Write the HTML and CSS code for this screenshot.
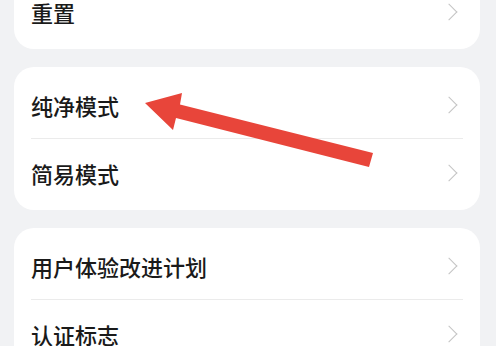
FILE: index.html
```html
<!doctype html>
<html lang="zh-CN">
<head>
    <meta charset="utf-8">
    <title>设置</title>
    <link rel="stylesheet" href="styles.css">
</head>
<body>
    <div class="page">
        <div class="card card-first">
            <div class="row"><span class="label">重置</span><span class="chev"></span></div>
        </div>

        <div class="card">
            <div class="row"><span class="label">纯净模式</span><span class="chev"></span></div>
            <div class="row"><span class="label">简易模式</span><span class="chev"></span></div>
        </div>

        <div class="card">
            <div class="row"><span class="label">用户体验改进计划</span><span class="chev"></span></div>
            <div class="row"><span class="label">认证标志</span><span class="chev"></span></div>
        </div>
    </div>

    <svg class="arrow" width="496" height="346" viewBox="0 0 496 346">
        <polygon points="145,103 182,93 180,104.5 373,153 369,167 176,118 173,130" fill="#e8453a"/>
    </svg>
</body>
</html>
```

FILE: styles.css
```css
body {
    margin: 0;
    background: #f1f2f4;
    font-family: "Noto Sans CJK SC", "Noto Sans", sans-serif;
    overflow: hidden;
}
.card {
    background: #fff;
    border-radius: 20px;
    margin: 0 16px 18px 14px;
    padding: 4px 0;
}
.card-first {
    margin-top: -26px;
}
.row {
    height: 67px;
    display: flex;
    align-items: center;
    justify-content: space-between;
    margin: 0 17px;
}
.row + .row {
    border-top: 1px solid #ebebeb;
}
.label {
    font-size: 22px;
    font-weight: 500;
    color: #1a1a1a;
}
.chev {
    width: 11px;
    height: 11px;
    border-top: 1.5px solid #c4c4c4;
    border-right: 1.5px solid #c4c4c4;
    transform: rotate(45deg);
    margin-right: 8px;
}
.arrow {
    position: absolute;
    left: 0;
    top: 0;
}
```
